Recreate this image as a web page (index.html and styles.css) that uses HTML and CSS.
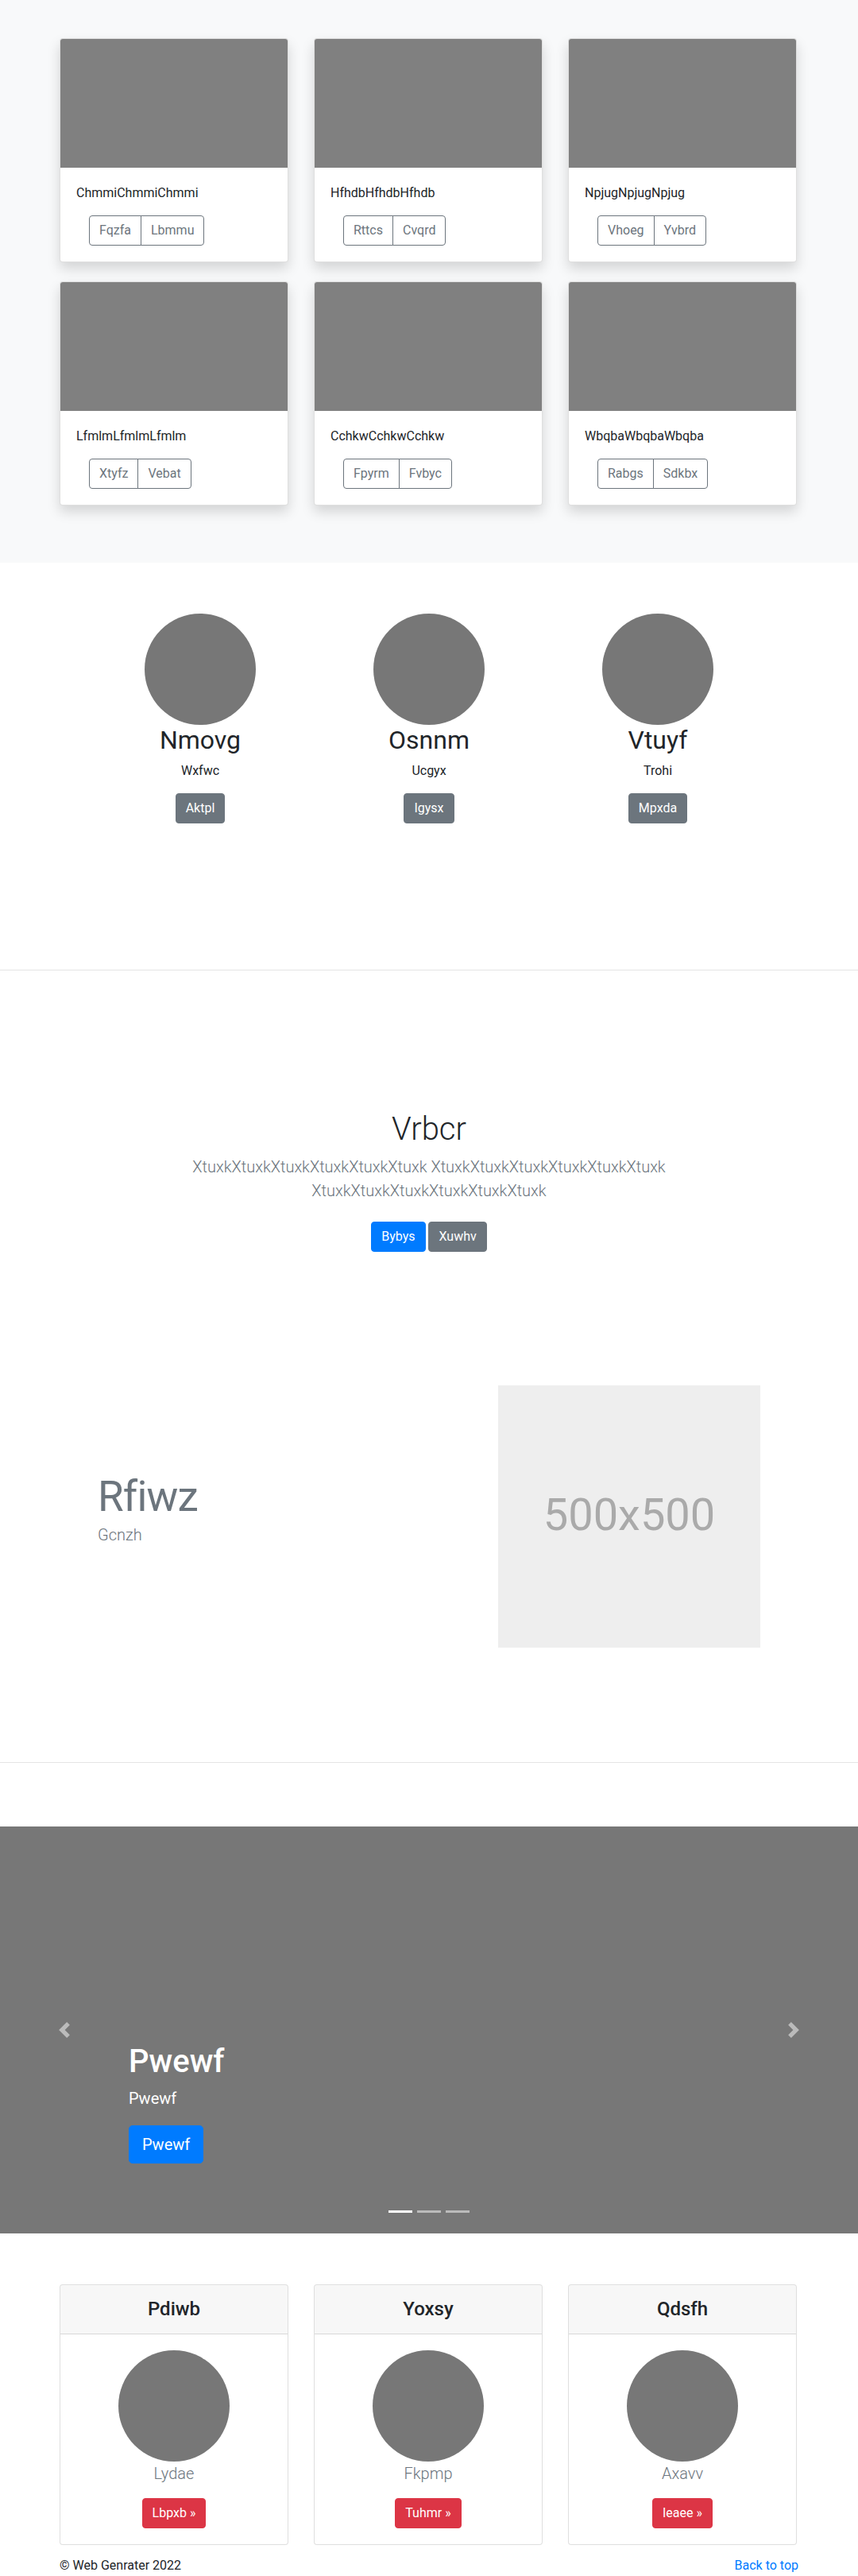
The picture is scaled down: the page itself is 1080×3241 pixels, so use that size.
FILE: index.html
```html
<!DOCTYPE html>
<html lang="en">
<head>
<meta charset="utf-8">
<title>Web Genrater</title>
<link rel="stylesheet" href="styles.css">
</head>
<body>

<section class="album">
  <div class="container">
    <div class="album-grid">
      <div class="card">
        <div class="card-thumb"></div>
        <div class="card-body">
          <p class="card-text">ChmmiChmmiChmmi</p>
          <div class="btn-group"><a class="btn btn-outline">Fqzfa</a><a class="btn btn-outline">Lbmmu</a></div>
        </div>
      </div>
      <div class="card">
        <div class="card-thumb"></div>
        <div class="card-body">
          <p class="card-text">HfhdbHfhdbHfhdb</p>
          <div class="btn-group"><a class="btn btn-outline">Rttcs</a><a class="btn btn-outline">Cvqrd</a></div>
        </div>
      </div>
      <div class="card">
        <div class="card-thumb"></div>
        <div class="card-body">
          <p class="card-text">NpjugNpjugNpjug</p>
          <div class="btn-group"><a class="btn btn-outline">Vhoeg</a><a class="btn btn-outline">Yvbrd</a></div>
        </div>
      </div>
      <div class="card">
        <div class="card-thumb"></div>
        <div class="card-body">
          <p class="card-text">LfmlmLfmlmLfmlm</p>
          <div class="btn-group"><a class="btn btn-outline">Xtyfz</a><a class="btn btn-outline">Vebat</a></div>
        </div>
      </div>
      <div class="card">
        <div class="card-thumb"></div>
        <div class="card-body">
          <p class="card-text">CchkwCchkwCchkw</p>
          <div class="btn-group"><a class="btn btn-outline">Fpyrm</a><a class="btn btn-outline">Fvbyc</a></div>
        </div>
      </div>
      <div class="card">
        <div class="card-thumb"></div>
        <div class="card-body">
          <p class="card-text">WbqbaWbqbaWbqba</p>
          <div class="btn-group"><a class="btn btn-outline">Rabgs</a><a class="btn btn-outline">Sdkbx</a></div>
        </div>
      </div>
    </div>
  </div>
</section>

<section class="marketing">
  <div class="container-narrow">
    <div class="marketing-grid">
      <div class="feature">
        <div class="circle"></div>
        <h2>Nmovg</h2>
        <p>Wxfwc</p>
        <p><a class="btn btn-secondary">Aktpl</a></p>
      </div>
      <div class="feature">
        <div class="circle"></div>
        <h2>Osnnm</h2>
        <p>Ucgyx</p>
        <p><a class="btn btn-secondary">Igysx</a></p>
      </div>
      <div class="feature">
        <div class="circle"></div>
        <h2>Vtuyf</h2>
        <p>Trohi</p>
        <p><a class="btn btn-secondary">Mpxda</a></p>
      </div>
    </div>
  </div>
</section>

<hr class="divider">

<section class="jumbotron">
  <div class="container-narrow">
    <h1>Vrbcr</h1>
    <p class="lead">XtuxkXtuxkXtuxkXtuxkXtuxkXtuxk XtuxkXtuxkXtuxkXtuxkXtuxkXtuxk XtuxkXtuxkXtuxkXtuxkXtuxkXtuxk</p>
    <p class="actions">
      <a class="btn btn-primary">Bybys</a>
      <a class="btn btn-secondary">Xuwhv</a>
    </p>
  </div>
</section>

<section class="container-narrow featurette">
  <div class="featurette-text">
    <h2 class="featurette-heading">Rfiwz</h2>
    <p class="lead">Gcnzh</p>
  </div>
  <svg class="placeholder" width="330" height="330" role="img" aria-label="500x500">
    <rect width="100%" height="100%" fill="#eeeeee"></rect>
    <text x="50%" y="50%" dy=".3em" text-anchor="middle" fill="#aaaaaa">500x500</text>
  </svg>
</section>

<hr class="divider">

<div class="carousel">
  <ol class="indicators">
    <li class="active"></li>
    <li></li>
    <li></li>
  </ol>
  <div class="carousel-caption">
    <h1>Pwewf</h1>
    <p>Pwewf</p>
    <p><a class="btn btn-lg btn-primary">Pwewf</a></p>
  </div>
  <a class="control control-prev" aria-label="Previous">
    <svg viewBox="0 0 8 8" width="20" height="20"><path fill="#fff" d="M5.25 0l-4 4 4 4 1.5-1.5L4.25 4l2.5-2.5L5.25 0z"/></svg>
  </a>
  <a class="control control-next" aria-label="Next">
    <svg viewBox="0 0 8 8" width="20" height="20"><path fill="#fff" d="M2.75 0l-1.5 1.5L3.750 4l-2.5 2.5L2.75 8l4-4-4-4z"/></svg>
  </a>
</div>

<div class="container">
  <div class="pricing">
    <div class="pcard">
      <div class="pcard-header"><h4>Pdiwb</h4></div>
      <div class="pcard-body">
        <div class="circle"></div>
        <p class="lead">Lydae</p>
        <a class="btn btn-danger">Lbpxb &raquo;</a>
      </div>
    </div>
    <div class="pcard">
      <div class="pcard-header"><h4>Yoxsy</h4></div>
      <div class="pcard-body">
        <div class="circle"></div>
        <p class="lead">Fkpmp</p>
        <a class="btn btn-danger">Tuhmr &raquo;</a>
      </div>
    </div>
    <div class="pcard">
      <div class="pcard-header"><h4>Qdsfh</h4></div>
      <div class="pcard-body">
        <div class="circle"></div>
        <p class="lead">Axavv</p>
        <a class="btn btn-danger">Ieaee &raquo;</a>
      </div>
    </div>
  </div>

  <footer class="footer">
    <p>&copy; Web Genrater 2022</p>
    <a class="back-top">Back to top</a>
  </footer>
</div>

</body>
</html>
```

FILE: styles.css
```css
* {
  box-sizing: border-box;
}

html,
body {
  margin: 0;
  padding: 0;
}

body {
  font-family: Roboto, "Liberation Sans", Arial, sans-serif;
  font-size: 16px;
  line-height: 1.5;
  color: #212529;
  background: #fff;
}

p {
  margin: 0 0 16px;
}

.container {
  width: 930px;
  margin: 0 auto;
}

.container-narrow {
  width: 834px;
  margin: 0 auto;
}

/* buttons */
.btn {
  display: inline-block;
  font-size: 16px;
  line-height: 24px;
  font-weight: 400;
  padding: 6px 12px;
  border: 1px solid transparent;
  border-radius: 4px;
  text-align: center;
  vertical-align: middle;
  text-decoration: none;
  cursor: pointer;
}

.btn-outline {
  color: #6c757d;
  border-color: #6c757d;
  background: transparent;
}

.btn-secondary {
  color: #fff;
  background: #6c757d;
  border-color: #6c757d;
}

.btn-primary {
  color: #fff;
  background: #007bff;
  border-color: #007bff;
}

.btn-danger {
  color: #fff;
  background: #dc3545;
  border-color: #dc3545;
}

.btn-lg {
  font-size: 20px;
  line-height: 30px;
  padding: 8px 16px;
  border-radius: 4.8px;
}

.btn-group {
  display: inline-flex;
  margin-left: 16px;
}

.btn-group .btn:first-child {
  border-top-right-radius: 0;
  border-bottom-right-radius: 0;
}

.btn-group .btn + .btn {
  margin-left: -1px;
  border-top-left-radius: 0;
  border-bottom-left-radius: 0;
}

/* album */
.album {
  background: #f8f9fa;
  padding: 48px 0 72px;
}

.album-grid {
  display: grid;
  grid-template-columns: repeat(3, 288px);
  column-gap: 32px;
  row-gap: 24px;
}

.card {
  background: #fff;
  border: 1px solid rgba(0, 0, 0, 0.125);
  border-radius: 4px;
  box-shadow: 0 8px 16px rgba(0, 0, 0, 0.15);
  overflow: hidden;
}

.card-thumb {
  height: 162px;
  background: #808080;
}

.card-body {
  padding: 20px;
}

.card-text {
  margin: 0 0 16px;
}

/* marketing */
.marketing {
  padding: 64px 0 168px;
}

.marketing-grid {
  display: grid;
  grid-template-columns: repeat(3, 258px);
  column-gap: 30px;
  text-align: center;
}

.circle {
  width: 140px;
  height: 140px;
  border-radius: 50%;
  background: #777;
  margin: 0 auto;
}

.feature h2 {
  font-size: 32px;
  font-weight: 400;
  line-height: 38.4px;
  margin: 0 0 8px;
}

.feature p {
  margin: 0 0 16px;
}

.divider {
  display: block;
  height: 0;
  margin: 0;
  border: 0;
  border-top: 1px solid rgba(0, 0, 0, 0.1);
}

/* jumbotron */
.jumbotron {
  text-align: center;
  padding: 176px 0 160px;
}

.jumbotron h1 {
  font-size: 40px;
  font-weight: 300;
  line-height: 48px;
  margin: 0 0 8px;
}

.lead {
  font-size: 20px;
  font-weight: 300;
  line-height: 30px;
}

.jumbotron .lead {
  color: #6c757d;
  max-width: 620px;
  margin: 0 auto 16px;
}

.jumbotron .actions {
  margin: 0;
}

.jumbotron .btn {
  margin: 8px 0;
}

/* featurette */
.featurette {
  display: grid;
  grid-template-columns: 474px 330px;
  column-gap: 30px;
  align-items: start;
  padding-bottom: 144px;
}

.featurette-heading {
  font-size: 53px;
  font-weight: 400;
  line-height: 1;
  letter-spacing: -0.8px;
  color: #6c757d;
  margin: 114px 0 6px;
}

.featurette .lead {
  color: #6c757d;
  margin: 0;
}

.placeholder {
  display: block;
  font-family: Roboto, "Liberation Sans", Arial, sans-serif;
  font-size: 56px;
}

/* carousel */
.carousel {
  position: relative;
  height: 512px;
  background: #777;
  margin: 80px 0 64px;
  overflow: hidden;
}

.carousel-caption {
  position: absolute;
  left: 15%;
  right: 15%;
  bottom: 48px;
  padding: 20px 0;
  color: #fff;
  text-align: left;
  z-index: 10;
}

.carousel-caption h1 {
  font-size: 40px;
  font-weight: 500;
  line-height: 48px;
  margin: 0 0 8px;
}

.carousel-caption p {
  font-size: 20px;
  line-height: 28px;
  margin: 0 0 20px;
}

.indicators {
  position: absolute;
  left: 15%;
  right: 15%;
  bottom: 0;
  z-index: 15;
  display: flex;
  justify-content: center;
  margin: 0 0 16px;
  padding: 0;
  list-style: none;
}

.indicators li {
  box-sizing: content-box;
  width: 30px;
  height: 3px;
  margin: 0 3px;
  background: #fff;
  background-clip: padding-box;
  border-top: 10px solid transparent;
  border-bottom: 10px solid transparent;
  opacity: 0.5;
}

.indicators li.active {
  opacity: 1;
}

.control {
  position: absolute;
  top: 0;
  bottom: 0;
  width: 15%;
  display: flex;
  align-items: center;
  justify-content: center;
  opacity: 0.5;
}

.control-prev {
  left: 0;
}

.control-next {
  right: 0;
}

.control svg {
  display: block;
  width: 20px;
  height: 20px;
}

/* pricing */
.pricing {
  display: grid;
  grid-template-columns: repeat(3, 288px);
  column-gap: 32px;
  text-align: center;
}

.pcard {
  border: 1px solid rgba(0, 0, 0, 0.125);
  border-radius: 4px;
  overflow: hidden;
  background: #fff;
}

.pcard-header {
  background: rgba(0, 0, 0, 0.03);
  border-bottom: 1px solid rgba(0, 0, 0, 0.125);
  padding: 16px 20px;
}

.pcard-header h4 {
  font-size: 24px;
  font-weight: 500;
  line-height: 28.8px;
  margin: 0;
}

.pcard-body {
  padding: 20px;
}

.pcard-body .lead {
  color: #6c757d;
  margin: 0 0 16px;
}

/* footer */
.footer {
  display: flex;
  justify-content: space-between;
  margin-top: 14px;
  line-height: 24px;
}

.footer p {
  margin: 0;
}

.back-top {
  color: #007bff;
  text-decoration: none;
}
```
